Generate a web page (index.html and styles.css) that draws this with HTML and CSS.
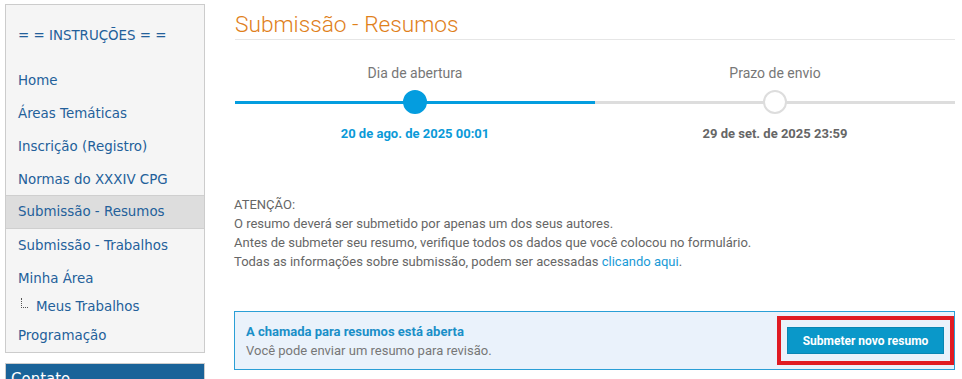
FILE: index.html
```html
<!DOCTYPE html>
<html>
  <head>
    <meta charset="utf-8">
    <title>Submissão - Resumos</title>
    <link rel="stylesheet" href="styles.css">
  </head>
  <body>
    <div class="page">
      <aside class="side">
        <div class="menu">
          <div class="menu-head">= = INSTRUÇÕES = =</div>
          <ul>
            <li><a href="#">Home</a></li>
            <li><a href="#">Áreas Temáticas</a></li>
            <li><a href="#">Inscrição (Registro)</a></li>
            <li><a href="#">Normas do XXXIV CPG</a></li>
            <li class="active"><a href="#">Submissão - Resumos</a></li>
            <li><a href="#">Submissão - Trabalhos</a></li>
            <li><a href="#">Minha Área</a></li>
            <li class="sub"><a href="#"><span class="tree"></span>Meus Trabalhos</a></li>
            <li><a href="#">Programação</a></li>
          </ul>
        </div>
        <div class="contact">Contato</div>
      </aside>

      <main class="main">
        <h1>Submissão - Resumos</h1>

        <div class="timeline">
          <div class="step done">
            <div class="step-label">Dia de abertura</div>
            <div class="track"><span class="dot"></span></div>
            <div class="step-date">20 de ago. de 2025 00:01</div>
          </div>
          <div class="step">
            <div class="step-label">Prazo de envio</div>
            <div class="track"><span class="dot"></span></div>
            <div class="step-date">29 de set. de 2025 23:59</div>
          </div>
        </div>

        <div class="notice">
          ATENÇÃO:<br>
          O resumo deverá ser submetido por apenas um dos seus autores.<br>
          Antes de submeter seu resumo, verifique todos os dados que você colocou no formulário.<br>
          Todas as informações sobre submissão, podem ser acessadas <a href="#">clicando aqui</a>.
        </div>

        <div class="callout">
          <div class="callout-text">
            <div class="callout-title">A chamada para resumos está aberta</div>
            <div class="callout-sub">Você pode enviar um resumo para revisão.</div>
          </div>
          <div class="mark">
            <button class="btn">Submeter novo resumo</button>
          </div>
        </div>
      </main>
    </div>
  </body>
</html>
```

FILE: styles.css
```css
html, body { margin: 0; padding: 0; background: #fff; }
body { overflow: hidden; height: 379px; }

.page {
  display: flex;
  align-items: flex-start;
  padding: 4px 0 0 5px;
}

/* sidebar */
.side { width: 200px; flex: none; }
.menu {
  background: #f5f5f5;
  border: 1px solid #cccccc;
  font-family: "DejaVu Sans", Verdana, sans-serif;
  font-size: 13.4px;
}
.menu-head {
  color: #23609a;
  padding: 22px 12px 20px;
  line-height: 17px;
}
.menu ul { list-style: none; margin: 0; padding: 0; }
.menu li a {
  display: block;
  color: #23609a;
  text-decoration: none;
  padding: 8px 12px;
  line-height: 17px;
}
.menu li.active a {
  background: #dddddd;
  border-top: 1px solid #cfcfcf;
  border-bottom: 1px solid #cfcfcf;
  padding: 7px 12px 8px;
  margin-top: -1px;
}
.menu li.sub a { padding: 3px 12px 4px 15px; }
.tree {
  display: inline-block;
  width: 6px;
  height: 9px;
  border-left: 1px dotted #555;
  border-bottom: 1px dotted #555;
  margin: 0 8px 3px 0;
}
.contact {
  margin-top: 10px;
  background: #1a6399;
  border: 1px solid #cccccc;
  color: #fff;
  font-family: "DejaVu Sans", Verdana, sans-serif;
  font-size: 15px;
  padding: 6px 5px;
}

/* main column */
.main {
  width: 720px;
  margin-left: 30px;
  font-family: Roboto, "Liberation Sans", sans-serif;
}
h1 {
  margin: 7px 0 0;
  font-size: 22.7px;
  font-weight: 300;
  line-height: 28px;
  color: #e0801a;
  border-bottom: 1px solid #e6e6e6;
}

.timeline { display: flex; margin-top: 25px; }
.step { flex: 1; text-align: center; }
.step-label {
  font-size: 14px;
  line-height: 17px;
  color: #777;
}
.track {
  position: relative;
  height: 24px;
  margin-top: 8px;
}
.track::before {
  content: "";
  position: absolute;
  left: 0; right: 0; top: 11px;
  height: 3px;
  background: #dddddd;
}
.dot {
  position: relative;
  display: inline-block;
  box-sizing: border-box;
  width: 24px;
  height: 24px;
  border-radius: 50%;
  background: #fff;
  border: 2px solid #dddddd;
}
.step.done .track::before { background: #049ddf; }
.step.done .dot { background: #049ddf; border-color: #049ddf; }
.step-date {
  margin-top: 12px;
  font-size: 13px;
  font-weight: 700;
  line-height: 16px;
  color: #666;
}
.step.done .step-date { color: #0b9ad8; }

.notice {
  margin-top: 53px;
  font-size: 13px;
  line-height: 19px;
  color: #666;
  margin-left: -1px;
}
.notice a { color: #1a9ad6; text-decoration: none; }

.callout {
  display: flex;
  align-items: center;
  justify-content: space-between;
  margin: 40px 0 0 -1px;
  height: 57px;
  background: #eaf2fb;
  border: 1px solid #2a9fd6;
  padding: 0 0 0 11px;
}
.callout-text { font-size: 13px; line-height: 19px; }
.callout-title { color: #1a8fc8; font-weight: 700; }
.callout-sub { color: #777; }
.mark {
  border: 4px solid #e01b22;
  padding: 7px 6px;
}
.btn {
  display: block;
  width: 157px;
  height: 27px;
  background: #0a98c9;
  border: 1px solid #0a86b3;
  color: #fff;
  font-family: Roboto, "Liberation Sans", sans-serif;
  font-size: 12px;
  font-weight: 700;
  padding: 0;
}
```
